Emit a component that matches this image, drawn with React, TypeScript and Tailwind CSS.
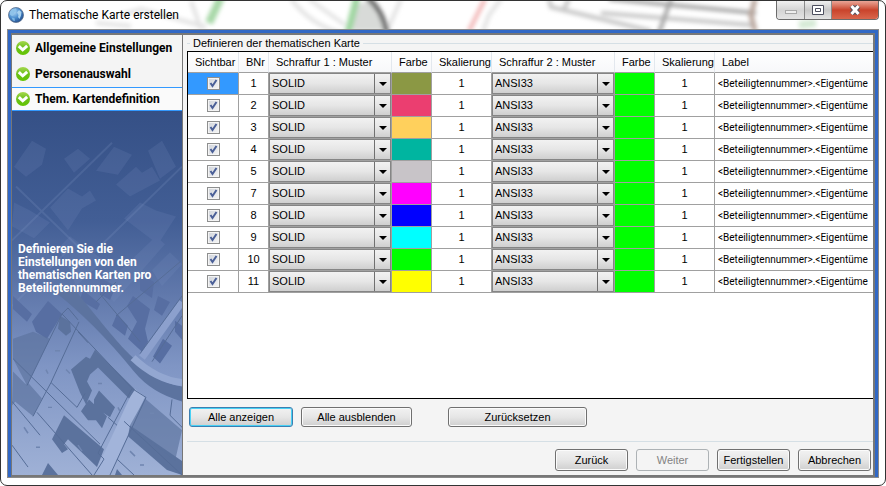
import React, { useState } from "react";

const colors = ["#8b9844", "#eb3e70", "#ffd05c", "#00b5a0", "#c8c4c8", "#ff00ff", "#0000ff", "#00ffff", "#00ff00", "#ffff00"];
const numbers = [1, 2, 3, 4, 5, 7, 8, 9, 10, 11];
const steps = ["Allgemeine Einstellungen", "Personenauswahl", "Them. Kartendefinition"];
const headers = ["Sichtbar", "BNr", "Schraffur 1 : Muster", "Farbe", "Skalierung", "Schraffur 2 : Muster", "Farbe", "Skalierung", "Label"];

const buttonBase = "rounded-[3px] border text-center whitespace-nowrap";
const buttonFace = "bg-linear-to-b from-[#f2f2f2] from-0% via-[#e6e6e6] via-50% to-[#cfcfcf]";
const buttonNormal = "border-[#707070] shadow-[inset_0_0_0_1px_#fbfbfb]";

function Globe() {
  return (
    <svg className="size-4 shrink-0" viewBox="0 0 16 16" aria-hidden="true">
      <defs>
        <radialGradient id="globe" cx="0.35" cy="0.3" r="0.8">
          <stop offset="0" stopColor="#b9dcf5" />
          <stop offset="0.5" stopColor="#4c8fd0" />
          <stop offset="1" stopColor="#1c4585" />
        </radialGradient>
      </defs>
      <circle cx="8" cy="8" r="7.5" fill="url(#globe)" stroke="#5a6f8c" strokeWidth="0.8" />
      <path d="M2 5 4 2.500 8 1.500 8.500 4 6.500 5.500 6 8 4 9 2 7.500z" fill="#8fc3ea" />
      <path d="M9 5.500 11 3 13.500 5 13 8.500 11.500 12 10 10 10.500 8z" fill="#a9d2ef" />
      <path d="M3.500 10.500 6.500 11 7 14 5 13.500z" fill="#7db5e2" />
    </svg>
  );
}

function CheckBadge() {
  return (
    <svg className="size-4 shrink-0" viewBox="0 0 16 16" aria-hidden="true">
      <defs>
        <linearGradient id="badge" x1="0" y1="0" x2="0" y2="1">
          <stop offset="0" stopColor="#a5d84e" />
          <stop offset="0.5" stopColor="#6cc01a" />
          <stop offset="1" stopColor="#62c400" />
        </linearGradient>
      </defs>
      <circle cx="8" cy="8" r="7" fill="url(#badge)" />
      <path d="M3.800 6.200 7.700 9.800 12.200 5.800" fill="none" stroke="#fff" strokeWidth="3" />
    </svg>
  );
}

function Backdrop() {
  return (
    <svg className="absolute inset-0 h-full w-full" viewBox="0 0 884 28" preserveAspectRatio="xMinYMin slice" aria-hidden="true">
      <defs>
        <filter id="soft" x="-10%" y="-50%" width="120%" height="200%">
          <feGaussianBlur stdDeviation="2.2" />
        </filter>
      </defs>
      <g fill="none" filter="url(#soft)">
        <path d="M95 22 130 25M120 14 140 8 205 26M190 0 200 28M290 -2Q310 24 340 32M308 -2 344 24M400 -2 386 30M500 -2 488 14 482 30" stroke="#e2e2e2" strokeWidth="4" />
        <path d="M220 -4 208 22" stroke="#a8d8a8" strokeWidth="8" />
        <path d="M354 4 368 0 386 30 352 30z" fill="#d8dad8" />
        <path d="M356 -4 347 32" stroke="#9fd6a0" strokeWidth="7" />
        <path d="M366 -4Q382 10 386 32" stroke="#666" strokeWidth="5" />
        <path d="M484 -2 468 30" stroke="#f2b6b6" strokeWidth="4" />
        <path d="M548 -2 550 6 600 18 650 30M563 8 568 -2M600 12 750 24" stroke="#c4c4c4" strokeWidth="4" />
        <path d="M608 -2 755 12M670 -2 658 32" stroke="#a4a4a4" strokeWidth="4" />
        <path d="M754 -2 750 14 754 30" stroke="#b9a69c" strokeWidth="5" />
        <path d="M798 24 815 22" stroke="#d5ead5" strokeWidth="8" />
      </g>
    </svg>
  );
}

function AerialMap() {
  return (
    <svg className="absolute inset-0 h-full w-full" viewBox="0 0 170 366" preserveAspectRatio="none" aria-hidden="true">
      <defs>
        <linearGradient id="ground" x1="0" y1="0" x2="0" y2="1">
          <stop offset="0" stopColor="#355086" />
          <stop offset="0.3" stopColor="#425e95" />
          <stop offset="0.5" stopColor="#6078ab" />
          <stop offset="0.7" stopColor="#7f95c4" />
          <stop offset="1" stopColor="#9fb1d6" />
        </linearGradient>
      </defs>
      <rect width="170" height="366" fill="url(#ground)" />
      <g fill="#8096c6" opacity="0.16">
        <path d="M38 97 56 78 70 86 78 80 84 90 70 98 56 120zM2 92 18 100 38 112 22 128 0 116zM112 108 128 92 144 100 164 106 146 134zM104 74 124 56 130 62 140 56 148 70 118 86zM46 138 58 126 72 136 92 150 64 176 58 160zM10 150 26 134 44 150 28 166zM84 60 102 36 120 44 106 64zM2 56 20 30 34 38 30 54 14 66zM136 40 150 30 164 56 148 68zM52 48 66 38 78 48 62 62z" />
        <path d="M90 178 144 126 153 134 102 192zM140 160 158 142 170 154 150 176z" />
      </g>
      <path d="M0 130 100 32M82 142 170 56M0 196 60 136M4 76 70 140" fill="none" stroke="#8197c6" strokeWidth="2" opacity="0.22" />
      <g fill="#576ea2">
        <path d="M1 186 20 204 15 212 1 199zM36 191 50 204 43 216 35 229 24 222 20 212zM71 180 88 194 85 200 68 190zM105 204 116 216 113 226 100 216zM121 186 138 199 133 219 136 232 130 242 116 229 125 212 115 196zM151 229 160 236 148 254 141 247zM163 211 170 216 170 230 163 222zM88 168 104 176 98 190 88 184zM128 164 142 172 140 188 128 180zM146 186 158 192 150 206 142 200z" />
      </g>
      <path d="M170 192 130 248" stroke="#8ca0cd" strokeWidth="7" />
      <path d="M38 178 63 180C92 216 108 236 120 247C134 262 150 274 170 277V292Q140 284 122 262Q82 212 38 178z" fill="#5c739f" />
      <path d="M121 248Q144 270 170 273" stroke="#93a7d1" strokeWidth="7" fill="none" />
      <path d="M122 279 133 287 98 366 82 366z" fill="#a2b4da" />
      <g fill="#5b729d">
        <path d="M48 206 58 212 59 222 54 226 46 219zM59 260 74 247 78 249 83 240 123 280 117 289 86 258 78 265 75 272 80 281 74 295 68 283zM82 290 87 281 103 298 98 308 82 297zM69 302 77 290 95 307 90 319 84 311 76 311zM40 330 52 306 92 340 85 358 56 330 52 335 56 340 50 344zM30 366 36 354 46 366zM103 366 105 360 110 366z" />
        <path d="M118 316 170 352 170 366 155 361 116 327z" />
        <path d="M1 229 21 222 38 229 15 276 1 249zM1 262 15 276 5 290 0 296zM15 272 30 289 21 307 3 292zM133 289 170 321 163 352 118 316z" opacity="0.65" />
      </g>
      <path d="M50 204 15 276M50 204 120 279 86 344 92 350 82 366M67 212 39 273 65 298 73 284M66 222 76 233M39 273 21 307M1 249 88 335M25 303 80 366M0 292 28 326M0 336 16 358M120 279 134 288 98 366M96 308 105 316M105 350 122 366M112 312 170 366M160 290 158 306 170 318M104 206 170 150M84 192 104 172M128 244 170 186M140 252 170 206M88 184 128 232M50 204 56 198 66 210" stroke="#556c97" strokeWidth="1" fill="none" />
      <path d="M43 241h5M34 260l2 4M54 260l4 4M12 318l4 6M66 336l4 6M118 342l5 5M86 274h4M24 338h4M128 356h4M138 304h4M36 298h4M106 298l2 4" stroke="#6f85b0" strokeWidth="1.500" fill="none" />
    </svg>
  );
}

function Pattern({ label, value }: { label: string; value: string }) {
  return (
    <div className={`grid h-[21px] w-full grid-cols-[1fr_16px] border border-[#858585] ${buttonFace}`}>
      <select aria-label={label} defaultValue={value} className="col-span-full row-start-1 h-full w-full appearance-none pl-[2px] outline-none">
        <option>SOLID</option>
        <option>ANSI33</option>
      </select>
      <span className="pointer-events-none col-start-2 row-start-1 flex items-center justify-center border-l border-[#707070]">
        <svg className="h-1 w-2" viewBox="0 0 8 4" aria-hidden="true"><path d="M0 0h8L4 4z" /></svg>
      </span>
    </div>
  );
}

function Tick({ label }: { label: string }) {
  const [on, setOn] = useState(true);
  return (
    <span className="mx-auto grid size-[13px]">
      <input type="checkbox" aria-label={label} checked={on} onChange={() => setOn(!on)} className="col-start-1 row-start-1 size-[13px] appearance-none border border-[#8e8f8f] bg-linear-to-br from-[#cfd3da] to-[#f6f6f6] shadow-[inset_0_0_0_1px_#f4f4f4]" />
      {on && (
        <svg className="pointer-events-none col-start-1 row-start-1 size-[13px]" viewBox="0 0 13 13" aria-hidden="true">
          <path d="M3.500 6 5.500 9 9.500 3" fill="none" stroke="#4a5f97" strokeWidth="2" />
        </svg>
      )}
    </span>
  );
}

export default function App() {
  return (
    <div className="flex h-screen min-h-[400px] flex-col overflow-hidden rounded-[7px] border border-[#333] bg-white font-['Liberation_Sans',Arial,sans-serif] text-[11px] leading-[13px] text-black">
      <header className="relative flex h-7 shrink-0 items-start justify-between overflow-hidden pr-[6px] pl-[7px]">
        <Backdrop />
        <div className="relative flex h-7 items-center gap-[5px]">
          <Globe />
          <h1 className="font-[Roboto,'Liberation_Sans',sans-serif] text-[12px] leading-4">Thematische Karte erstellen</h1>
        </div>
        <div className="relative flex h-[19px] overflow-hidden rounded-b-[4px] border border-t-0 border-[#6b6b6b]">
          <button aria-label="Minimieren" className="flex w-7 items-center justify-center border-r border-[#8a8a8a] bg-linear-to-b from-[#f0f0f0] via-[#d4d4d4] to-[#e4e4e4]">
            <span className="mt-1 h-1 w-3 border border-[#a8a8a8] bg-[#eee]" />
          </button>
          <button aria-label="Maximieren" className="flex w-[27px] items-center justify-center border-r border-[#8a8a8a] bg-linear-to-b from-[#f0f0f0] via-[#c8c8c8] to-[#e4e4e4]">
            <svg className="h-[10px] w-3" viewBox="0 0 12 10" aria-hidden="true"><path d="M.5.5h11v9H.5zM3.500 3.500h5v3h-5z" fill="#fff" stroke="#4d4f5e" /></svg>
          </button>
          <button aria-label="Schließen" className="flex w-[46px] items-center justify-center bg-linear-to-b from-[#e9a597] from-0% via-[#c9432b] via-50% to-[#d9664c]">
            <svg className="h-[10px] w-3" viewBox="0 0 12 10" aria-hidden="true">
              <path d="M2.500 1 9.500 9M9.500 1 2.500 9" stroke="#54505a" strokeWidth="5" />
              <path d="M2.500 1 9.500 9M9.500 1 2.500 9" stroke="#fff" strokeWidth="3" />
            </svg>
          </button>
        </div>
      </header>

      <div className="mx-[6px] mb-[7px] flex min-h-0 flex-1 border border-[#8a8a8a] bg-[#3168c5] px-[3px] pt-[3px]">
        <main className="flex min-w-0 flex-1 border-2 border-l border-[#777] bg-[#f4f4f4]">
          <aside className="flex w-[171px] shrink-0 flex-col border-r border-[#777] font-[Roboto,'Liberation_Sans',sans-serif] text-[12px] leading-[13px] font-bold">
            <ol>
              {steps.map((s, i) => (
                <li key={s} className={i === 2 ? "flex h-[24px] items-center gap-1 border-y border-[#3399ff] bg-[#fafafa] pl-[3px]" : "flex h-[26px] items-center gap-1 pl-[3px]"}>
                  <CheckBadge />
                  <span className="whitespace-nowrap">{s}</span>
                </li>
              ))}
            </ol>
            <div className="relative flex-1">
              <AerialMap />
              <p className="relative pt-[132px] pl-[6px] text-white">
                Definieren Sie die<br />Einstellungen von den<br />thematischen Karten pro<br />Beteiligtennummer.
              </p>
            </div>
          </aside>

          <div className="flex min-w-0 flex-1 flex-col pl-1">
            <section aria-labelledby="group-title" className="flex min-h-0 min-w-0 flex-1 flex-col">
              <div className="flex h-4 shrink-0 items-center gap-[3px]">
                <span className="h-px w-[3px] bg-[#d5dfe5]" />
                <h2 id="group-title">Definieren der thematischen Karte</h2>
                <span className="h-px flex-1 bg-[#d5dfe5]" />
              </div>
              <div className="min-h-0 flex-1 overflow-hidden border border-r-0 border-black bg-white">
                <table className="w-full table-fixed border-separate border-spacing-0">
                  <colgroup>
                    <col className="w-[51px]" /><col className="w-[30px]" /><col className="w-[123px]" /><col className="w-[40px]" /><col className="w-[60px]" /><col className="w-[123px]" /><col className="w-[40px]" /><col className="w-[60px]" /><col />
                  </colgroup>
                  <thead>
                    <tr className="h-[21px]">
                      {headers.map((h, i) => (
                        <th key={i} scope="col" className="border-r border-b border-r-[#e3e8ee] border-b-[#a0a0a0] bg-linear-to-b from-white to-[#f7f8fa] p-0 pl-[7px] text-left font-normal whitespace-nowrap last:border-r-0">{h}</th>
                      ))}
                    </tr>
                  </thead>
                  <tbody>
                    {numbers.map((n, i) => (
                      <tr key={n} className="h-[22px] *:border-r *:border-b *:border-[#a0a0a0] *:p-0 *:last:border-r-0">
                        <td className={i === 0 ? "bg-[#3399ff]" : ""}><Tick label={`Sichtbar ${n}`} /></td>
                        <td className="text-center">{n}</td>
                        <td><Pattern label={`Schraffur 1 ${n}`} value="SOLID" /></td>
                        <td><div className="h-[21px]" style={{ backgroundColor: colors[i] }} /></td>
                        <td className="text-center">1</td>
                        <td><Pattern label={`Schraffur 2 ${n}`} value="ANSI33" /></td>
                        <td><div className="h-[21px] bg-[#00ff00]" /></td>
                        <td className="text-center">1</td>
                        <td className="overflow-hidden pl-[3px]! font-[Roboto,'Liberation_Sans',sans-serif] text-[10px] whitespace-nowrap">&lt;Beteiligtennummer&gt;.&lt;Eigentüme</td>
                      </tr>
                    ))}
                  </tbody>
                </table>
              </div>
              <div className="flex h-[43px] shrink-0 items-start border-b border-[#d5dfe5] pt-2 pl-[2px]">
                <button className={`${buttonBase} ${buttonFace} h-5 w-[104px] border-[#3c7fb1] shadow-[inset_0_0_0_1px_#48d1f5]`}>Alle anzeigen</button>
                <button className={`${buttonBase} ${buttonFace} ${buttonNormal} ml-2 h-5 w-[111px]`}>Alle ausblenden</button>
                <button className={`${buttonBase} ${buttonFace} ${buttonNormal} ml-9 h-5 w-[139px]`}>Zurücksetzen</button>
              </div>
            </section>
            <footer className="flex shrink-0 justify-end gap-2 pt-[7px] pr-[2px] pb-1">
              <button className={`${buttonBase} ${buttonFace} ${buttonNormal} h-[22px] w-[73px]`}>Zurück</button>
              <button disabled className={`${buttonBase} h-[22px] w-[73px] border-[#adb2b5] bg-[#f4f4f4] text-[#838383]`}>Weiter</button>
              <button className={`${buttonBase} ${buttonFace} ${buttonNormal} h-[22px] w-[73px]`}>Fertigstellen</button>
              <button className={`${buttonBase} ${buttonFace} ${buttonNormal} h-[22px] w-[73px]`}>Abbrechen</button>
            </footer>
          </div>
        </main>
      </div>
    </div>
  );
}
